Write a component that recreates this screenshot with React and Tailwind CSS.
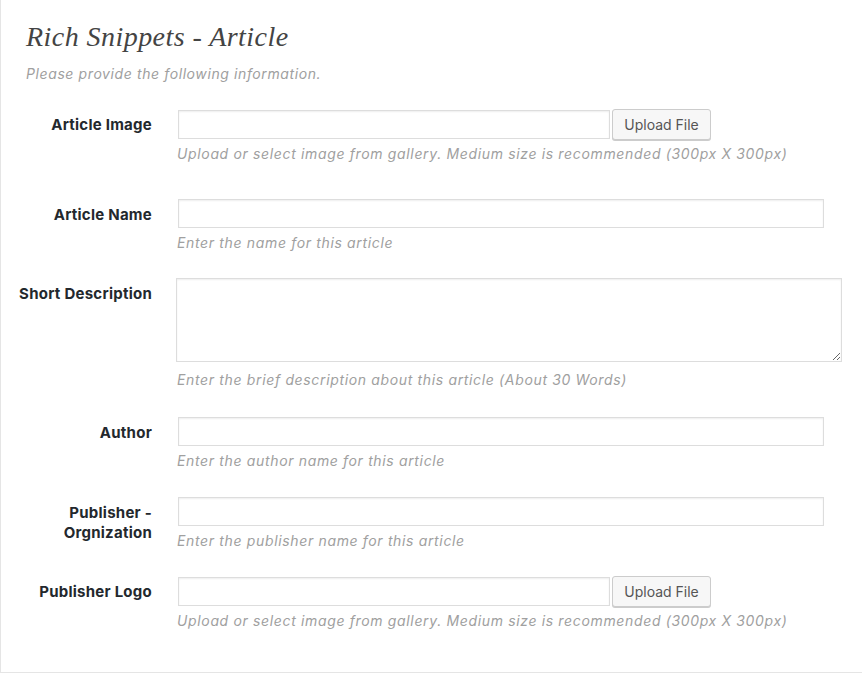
export default function App() {
  const sans = { fontFamily: 'Inter, "Liberation Sans", Arial, sans-serif' };

  const inputCls =
    "h-[29px] border border-[#dddddd] bg-white shadow-[inset_0_1px_2px_rgba(0,0,0,0.07)] outline-none";

  const Label = ({ children }) => (
    <div className="w-[151px] shrink-0 pt-[6px] text-right text-[15px] font-bold leading-[20px] tracking-[0.25px] text-[#23282d]">
      {children}
    </div>
  );

  const Desc = ({ children, className = "" }) => (
    <p className={"text-[14px] italic leading-[20px] tracking-[0.65px] text-[#a0a0a0] " + className}>
      {children}
    </p>
  );

  const UploadRow = ({ label, className = "" }) => (
    <div className={"flex " + className}>
      <Label>{label}</Label>
      <div className="ml-[26px] flex-1">
        <div className="flex items-center">
          <input type="text" className={inputCls + " w-[432px]"} />
          <button className="ml-[2px] h-[31px] w-[99px] rounded-[3px] border border-[#cccccc] bg-[#f7f7f7] text-[14px] text-[#555555] shadow-[0_1px_0_#cccccc]">
            Upload File
          </button>
        </div>
        <Desc className="mt-[4px] -ml-px">
          Upload or select image from gallery. Medium size is recommended (300px X 300px)
        </Desc>
      </div>
    </div>
  );

  const TextRow = ({ label, desc, className = "" }) => (
    <div className={"flex " + className}>
      <Label>{label}</Label>
      <div className="ml-[26px] flex-1">
        <input type="text" className={inputCls + " block w-[646px]"} />
        <Desc className="mt-[5px] -ml-px">{desc}</Desc>
      </div>
    </div>
  );

  return (
    <div className="h-[674px] w-[862px] bg-white" style={sans}>
      <div className="h-[673px] border-b border-l border-[#e5e5e5] pt-[20px]">
        <h1
          className="pl-[25px] text-[28px] italic leading-[34px] tracking-[0.45px] text-[#444444]"
          style={{ fontFamily: '"Liberation Serif", Georgia, serif' }}
        >
          Rich Snippets - Article
        </h1>
        <p className="mt-[10px] pl-[25px] text-[14px] italic leading-[20px] tracking-[0.6px] text-[#a0a0a0]">
          Please provide the following information.
        </p>

        <UploadRow label="Article Image" className="mt-[25px]" />

        <TextRow
          label="Article Name"
          desc="Enter the name for this article"
          className="mt-[35px]"
        />

        <div className="mt-[25px] flex">
          <Label>Short Description</Label>
          <div className="ml-[24px] flex-1">
            <textarea className="block h-[84px] w-[666px] resize-y border border-[#dddddd] bg-white shadow-[inset_0_1px_2px_rgba(0,0,0,0.07)] outline-none" />
            <Desc className="mt-[8px] ml-px">
              Enter the brief description about this article (About 30 Words)
            </Desc>
          </div>
        </div>

        <TextRow
          label="Author"
          desc="Enter the author name for this article"
          className="mt-[27px]"
        />

        <TextRow
          label={
            <>
              Publisher -<br />
              Orgnization
            </>
          }
          desc="Enter the publisher name for this article"
          className="mt-[26px]"
        />

        <UploadRow label="Publisher Logo" className="mt-[25px]" />
      </div>
    </div>
  );
}
